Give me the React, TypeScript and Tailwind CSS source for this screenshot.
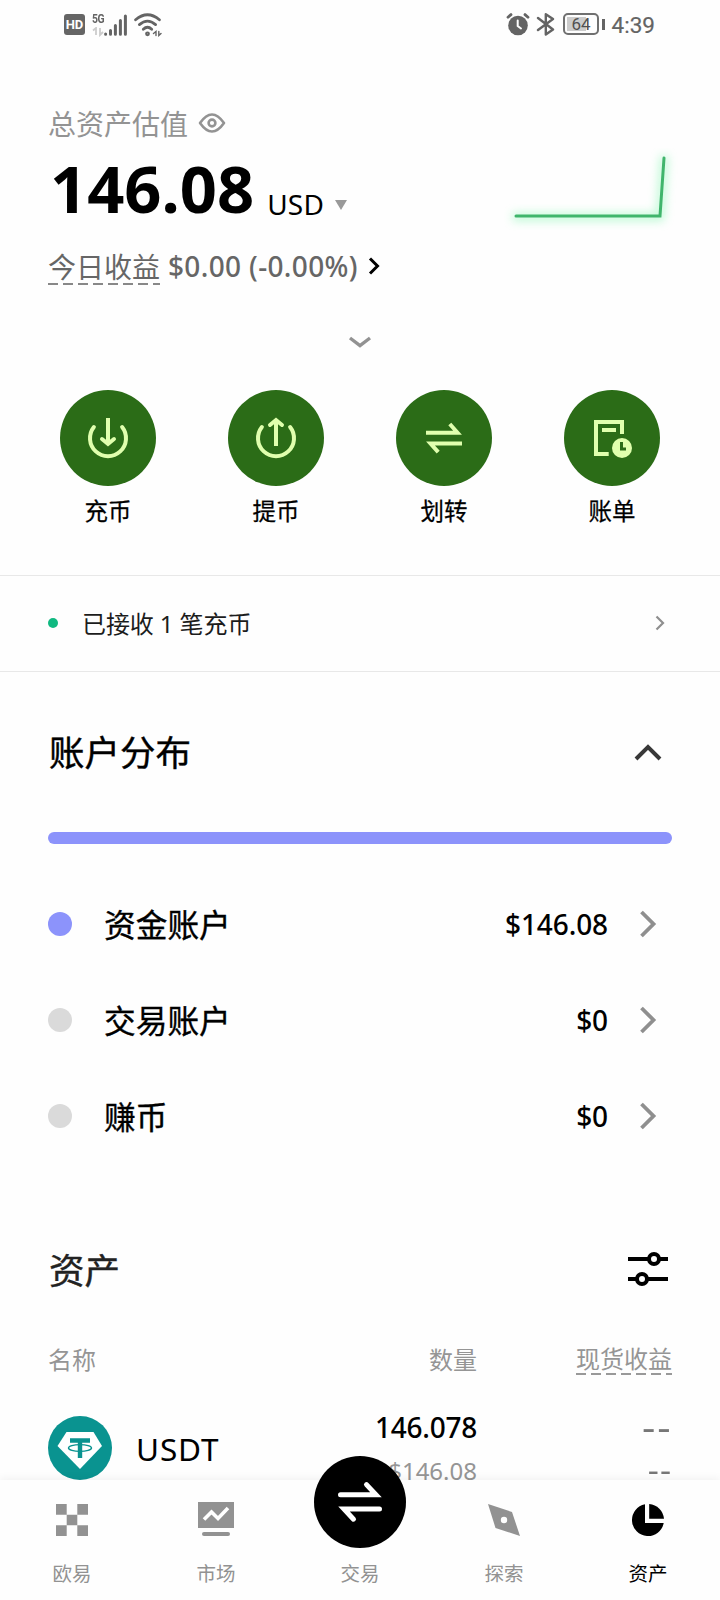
import React from 'react';

const ACTIONS = [
  { key: 'deposit', label: '充币' },
  { key: 'withdraw', label: '提币' },
  { key: 'transfer', label: '划转' },
  { key: 'bills', label: '账单' },
];

const ACCOUNTS = [
  { name: '资金账户', value: '$146.08', dot: 'bg-[#8c93fb]' },
  { name: '交易账户', value: '$0', dot: 'bg-[#dadada]' },
  { name: '赚币', value: '$0', dot: 'bg-[#dadada]' },
];

const TABS = [
  { key: 'home', label: '欧易' },
  { key: 'market', label: '市场' },
  { key: 'trade', label: '交易' },
  { key: 'explore', label: '探索' },
  { key: 'assets', label: '资产' },
];

const ActionIcon: React.FC<{ name: string }> = ({ name }) => (
  <svg viewBox="0 0 96 96" className="w-24 h-24" fill="none" stroke="#e0ffae" strokeWidth="4">
    {name === 'deposit' && (
      <>
        <path d="M33.9 37A18 18 0 1 0 62.1 37" strokeLinecap="round" />
        <path d="M48 28V54" />
        <path d="M42 49L48 54L54 49" strokeLinecap="round" />
      </>
    )}
    {name === 'withdraw' && (
      <>
        <path d="M33.9 37A18 18 0 1 0 62.1 37" strokeLinecap="round" />
        <path d="M48 56V30" />
        <path d="M42 35L48 30L54 35" strokeLinecap="round" />
      </>
    )}
    {name === 'transfer' && (
      <>
        <path d="M30 42.7H61.5L53.8 34" />
        <path d="M66 53.5H34.5L42.2 62.2" />
      </>
    )}
    {name === 'bills' && (
      <>
        <path d="M58 44V32H32V64H44.7" />
        <path d="M38 40H52" />
        <circle cx="58" cy="58" r="10" fill="#e0ffae" stroke="none" />
        <path d="M57.5 52V59H62" stroke="#2b6c17" strokeWidth="3" />
      </>
    )}
  </svg>
);

const TabIcon: React.FC<{ name: string }> = ({ name }) => (
  <svg viewBox="0 0 40 40" className="w-10 h-10" fill="#929292">
    {name === 'home' && (
      <path d="M4 4h10.7v10.7H4zM25.3 4H36v10.7H25.3zM14.7 14.7h10.6v10.6H14.7zM4 25.3h10.7V36H4zM25.3 25.3H36V36H25.3z" />
    )}
    {name === 'market' && (
      <>
        <path d="M2 2H38V28H2z" />
        <path d="M8 19.5L15.5 12L22 18.5L32 8" fill="none" stroke="#fff" strokeWidth="3.6" />
        <rect x="6" y="32" width="28" height="4" rx="2" />
      </>
    )}
    {name === 'explore' && (
      <>
        <path d="M4 4L28 12L36 36L11.5 28z" />
        <circle cx="20" cy="20" r="3.2" fill="#fff" />
      </>
    )}
    {name === 'assets' && (
      <>
        <path d="M17 4.3A16 16 0 1 0 35.7 23H17z" fill="#000" />
        <path d="M21.2 4A16 16 0 0 1 36 18.8H21.2z" fill="#000" />
      </>
    )}
  </svg>
);

const StatusBar: React.FC = () => (
  <div className="flex items-center justify-between h-12 shrink-0 pl-16 pr-[65px] text-[#646464]">
    <div className="flex items-center pt-0.5">
      <div className="w-[21px] h-[21px] -mt-px rounded-[3px] bg-[#656565] text-[#fefefe] text-[13px] leading-[21px] font-bold font-['Roboto'] text-center">HD</div>
      <div className="ml-[7px] w-[12px] h-[24px] flex flex-col">
        <span className="text-[13px] leading-[12px] font-bold font-['Roboto'] tracking-[-0.5px] origin-left scale-x-[0.8]">5G</span>
        <svg viewBox="0 0 12 10" className="w-3 h-[10px] mt-0.5" fill="none" stroke="#cccccc" strokeWidth="1.8">
          <path d="M1 3.5L4 1V8M8 1V8L11 5" />
        </svg>
      </div>
      <svg viewBox="0 0 24 24" className="w-6 h-6 -mt-px" stroke="#646464" strokeWidth="3" strokeLinecap="round">
        <path d="M1.6 21V21.2M6.5 17.5V21.2M11.4 12.5V21.2M16.4 7.5V21.2M21.4 3V21.2" />
      </svg>
      <svg viewBox="0 0 28 24" className="w-7 h-6 ml-[6px] -mt-px" fill="none" stroke="#646464" strokeWidth="2.8" strokeLinecap="round">
        <path d="M1.6 6.8Q13.5 -3.2 25.4 6.8" />
        <path d="M5.4 11.6Q13.5 4.6 21.6 11.6" />
        <path d="M9.3 16.2Q13.5 12.2 17.7 16.2" />
        <circle cx="13.5" cy="20.8" r="1" />
        <path d="M19.5 20.5L22 18.5V22.5M24.8 18.5V22.5L27 20.5" strokeWidth="1.4" />
      </svg>
    </div>
    <div className="flex items-center">
      <svg viewBox="0 0 24 24" className="w-6 h-6" fill="none" stroke="#646464" strokeWidth="2.8" strokeLinecap="round">
        <circle cx="12" cy="13.5" r="9.8" fill="#646464" stroke="none" />
        <path d="M2 5.2L5 2.6M22 5.2L19 2.6" />
        <path d="M11.7 8.5V14L15 16.5" stroke="#fefefe" strokeWidth="2" />
      </svg>
      <svg viewBox="0 0 20 24" className="w-5 h-6 ml-[6px]" fill="none" stroke="#646464" strokeWidth="2.4" strokeLinejoin="round" strokeLinecap="round">
        <path d="M2 6L17 17.5L9.8 22.5V2.2L17 7L2 18" />
      </svg>
      <div className="ml-[7px] w-[36px] h-[22px] rounded-[5px] border-2 border-[#707070] p-[2px]">
        <div className="relative h-full">
          <div className="h-full w-[19px] bg-[#cccccc]" />
          <span className="absolute inset-0 text-center text-[17px] leading-[14px] text-[#505050] font-['Roboto']">64</span>
        </div>
      </div>
      <div className="ml-[3px] w-[2.5px] h-[11px] bg-[#646464]" />
      <span className="ml-[7px] mt-0.5 text-[22.5px] leading-6 font-['Roboto'] [-webkit-text-stroke:0.2px]">4:39</span>
    </div>
  </div>
);

const Swap: React.FC = () => (
  <svg viewBox="0 0 92 92" className="w-[92px] h-[92px]" fill="none" stroke="#fff" strokeWidth="5" strokeLinecap="round">
    <path d="M26.5 38.8H62L52.5 28.6" />
    <path d="M65.5 53H30L39.5 63.2" />
  </svg>
);

const App: React.FC = () => (
  <div className="w-[720px] h-[1600px] bg-[#fefefe] overflow-hidden flex flex-col text-black font-['Noto_Sans','Noto_Sans_CJK_SC',sans-serif]">
    <StatusBar />

    <main className="flex-1 min-h-0 flex flex-col">
      <section className="px-12 pt-[58px] flex flex-col">
        <div className="h-9 flex items-center text-[#939393]">
          <span className="text-[28px] leading-9">总资产估值</span>
          <svg viewBox="0 0 28 20" className="w-7 h-5 ml-[10px] -mt-0.5" fill="none" stroke="#939393" strokeWidth="2.6">
            <path d="M2 10Q8 1.5 14 1.5T26 10Q20 18.5 14 18.5T2 10z" strokeLinejoin="round" />
            <circle cx="14" cy="10" r="3.4" />
          </svg>
        </div>
        <div className="mt-1.5 h-20 flex justify-between">
          <div className="flex items-baseline pl-0.5">
            <span className="text-[65px] leading-[80px] font-bold">146.08</span>
            <span className="ml-[13px] text-[28px] tracking-[0.2px] translate-y-[1.5px]">USD</span>
            <svg viewBox="0 0 12 10" className="w-3 h-[10px] ml-[11px] -translate-y-[3px]" fill="#999">
              <path d="M0 0H12L6 10z" />
            </svg>
          </div>
          <svg viewBox="0 0 180 90" className="w-[180px] h-[90px] -mr-3" fill="none" strokeLinecap="round">
            <defs>
              <filter id="glow" x="-20%" y="-30%" width="140%" height="160%">
                <feGaussianBlur stdDeviation="5" />
              </filter>
            </defs>
            <path d="M12 69H156L160 11" stroke="#7cf5ab" strokeWidth="8" opacity="0.5" filter="url(#glow)" />
            <path d="M12 68H156L160 10" stroke="#40b56c" strokeWidth="3" />
          </svg>
        </div>
        <div className="mt-[21px] h-9 flex items-center text-[28px] leading-9 text-[#666]">
          <div className="flex flex-col w-28 h-9">
            <span className="h-[34px] leading-9 whitespace-nowrap">今日收益</span>
            <span className="h-[1.5px] bg-[repeating-linear-gradient(90deg,#888_0_10px,transparent_10px_15px)]" />
          </div>
          <span className="ml-2 -mt-0.5 font-medium tracking-[0.35px] whitespace-nowrap">$0.00 (-0.00%)</span>
          <svg viewBox="0 0 12 18" className="w-3 h-[18px] ml-[10px] -mt-0.5" fill="none" stroke="#000" strokeWidth="3">
            <path d="M2 1.5L9.5 9L2 16.5" />
          </svg>
        </div>
        <svg viewBox="0 0 24 20" className="w-6 h-5 mt-[46px] self-center" fill="none" stroke="#929292" strokeWidth="3.4">
          <path d="M2 7L12 14.5L22 7" />
        </svg>
      </section>

      <section className="mt-[39px] px-6 flex">
        {ACTIONS.map(a => (
          <div key={a.key} className="w-[168px] flex flex-col items-center">
            <div className="w-24 h-24 rounded-full bg-[#2b6c17]">
              <ActionIcon name={a.key} />
            </div>
            <span className="mt-[9px] h-8 text-[23.5px] leading-8 [-webkit-text-stroke:0.25px]">{a.label}</span>
          </div>
        ))}
      </section>

      <div className="mt-12 h-[97px] shrink-0 px-12 flex items-center border-y border-[#e8e8e8]">
        <span className="w-[10px] h-[10px] -mt-0.5 rounded-full bg-[#10b981]" />
        <span className="ml-6 text-[24px] leading-8 tracking-[-0.1px] text-[#1c1c1c]">已接收 1 笔充币</span>
        <svg viewBox="0 0 10 16" className="w-[10px] h-4 ml-auto mr-[7px] -mt-0.5" fill="none" stroke="#8f8f8f" strokeWidth="2.2">
          <path d="M1.5 1.5L8 8L1.5 14.5" />
        </svg>
      </div>

      <section className="mt-14 px-12">
        <div className="h-12 flex items-center justify-between">
          <h2 className="pl-px -mt-px text-[35.5px] leading-[48px] [-webkit-text-stroke:0.4px]">账户分布</h2>
          <svg viewBox="0 0 28 18" className="w-7 h-[18px] mr-[10px]" fill="none" stroke="#383838" strokeWidth="4">
            <path d="M2 16L14 4L26 16" />
          </svg>
        </div>
        <div className="mt-14 h-3 rounded-full bg-[#8c93fb]" />
        <div className="mt-8">
          {ACCOUNTS.map(account => (
            <div key={account.name} className="h-24 flex items-center">
              <span className={`w-6 h-6 rounded-full ${account.dot}`} />
              <span className="ml-8 pt-px text-[31.7px] leading-10 [-webkit-text-stroke:0.35px]">{account.name}</span>
              <span className="ml-auto text-[28px] leading-10 font-medium tracking-[-0.1px]">{account.value}</span>
              <svg viewBox="0 0 18 28" className="w-[18px] h-7 ml-8 mr-[14px]" fill="none" stroke="#8f8f8f" strokeWidth="3.8">
                <path d="M1.5 2L13.5 14L1.5 26" />
              </svg>
            </div>
          ))}
        </div>
      </section>

      <section className="mt-[82px] px-12">
        <div className="h-12 flex items-center justify-between">
          <h2 className="pl-px -mt-px text-[35.5px] leading-[48px] [-webkit-text-stroke:0.4px] text-[#222]">资产</h2>
          <svg viewBox="0 0 40 36" className="w-10 h-9 mr-1" fill="none" stroke="#000" strokeWidth="4">
            <path d="M0 7H21M31 7H40M0 27H9M19 27H40" />
            <circle cx="26" cy="7" r="5" />
            <circle cx="14" cy="27" r="5" />
          </svg>
        </div>
        <div className="mt-[50px] h-8 flex items-center text-[24px] leading-8 text-[#959595]">
          <span className="w-[200px]">名称</span>
          <span className="w-[229px] text-right">数量</span>
          <div className="ml-auto w-24 h-8 flex flex-col">
            <span className="h-[29px] leading-[30px] whitespace-nowrap">现货收益</span>
            <span className="h-[1.5px] bg-[repeating-linear-gradient(90deg,#999_0_10px,transparent_10px_15px)]" />
          </div>
        </div>
        <div className="mt-6 h-20 flex">
          <svg viewBox="0 0 64 64" className="w-16 h-16 mt-4" fill="none">
            <circle cx="32" cy="32" r="32" fill="#0a9390" />
            <path d="M18.5 16H45.5L54 30L32 53L9.5 30z" fill="#fff" />
            <path d="M22 24.5H42M32 24.5V42" stroke="#0a9390" strokeWidth="4.4" />
            <ellipse cx="32" cy="32" rx="11.5" ry="3.4" stroke="#0a9390" strokeWidth="1.4" />
          </svg>
          <span className="ml-6 w-[120px] mt-[29px] text-[31.5px] leading-10 tracking-[0.9px]">USDT</span>
          <div className="w-[221px] flex flex-col items-end">
            <span className="mt-[7px] text-[28px] leading-10 font-medium tracking-[-0.25px]">146.078</span>
            <span className="mt-3 text-[24px] leading-[24px] text-[#959595]">$146.08</span>
          </div>
          <div className="ml-auto flex flex-col items-end text-[#777]">
            <span className="mt-[7px] text-[36px] leading-10 tracking-[1.5px] origin-right scale-x-[1.15]">--</span>
            <span className="mt-[11px] text-[30px] leading-[24px] tracking-[1px] origin-right scale-x-[1.15]">--</span>
          </div>
        </div>
      </section>
    </main>

    <nav className="relative h-[120px] shrink-0 bg-[#fefefe] flex shadow-[0_-2px_8px_rgba(0,0,0,0.05)]">
      {TABS.map(tab => (
        <div key={tab.key} className={`w-36 flex flex-col items-center justify-end text-[19.5px] pb-[12px] ${tab.key === 'assets' ? 'text-black' : 'text-[#929292]'}`}>
          {tab.key === 'trade' ? (
            <div className="w-[92px] h-[92px] shrink-0 rounded-full bg-black">
              <Swap />
            </div>
          ) : (
            <TabIcon name={tab.key} />
          )}
          <span className={`h-7 leading-7 ${tab.key === 'trade' ? 'mt-[12px]' : 'mt-[20px]'}`}>{tab.label}</span>
        </div>
      ))}
    </nav>
  </div>
);

export default App;
